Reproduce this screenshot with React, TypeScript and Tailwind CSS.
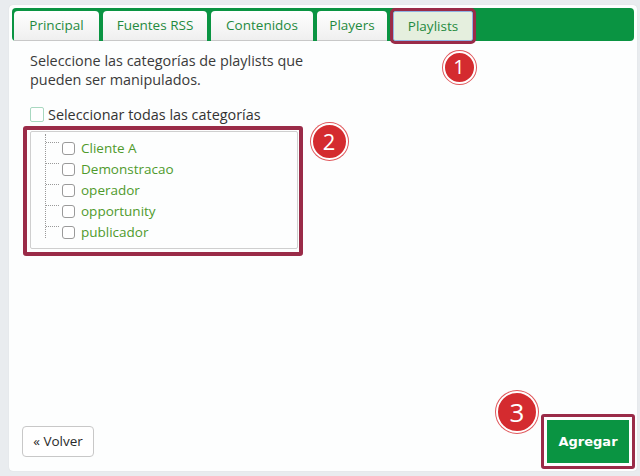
import React from 'react'

const font = { fontFamily: '"Open Sans", "DejaVu Sans", sans-serif' }

function Badge({ n, size, text, x, y }: { n: string; size: number; text: string; x: number; y: number }) {
  return (
    <div
      className="absolute rounded-full bg-[#d42b2f] border-2 border-white ring-1 ring-[#e0575b] flex items-center justify-center text-white"
      style={{ width: size, height: size, left: x - size / 2, top: y - size / 2 }}
    >
      <span className={text}>{n}</span>
    </div>
  )
}

const tabs = [
  { label: 'Principal', w: 'w-[85px]' },
  { label: 'Fuentes RSS', w: 'w-[104px]' },
  { label: 'Contenidos', w: 'w-[102px]' },
  { label: 'Players', w: 'w-[70px]' },
]

const cats = ['Cliente A', 'Demonstracao', 'operador', 'opportunity', 'publicador']

export default function App() {
  return (
    <div className="relative w-[640px] h-[476px] bg-[#e9ecef] pt-[5px] pl-[9px] overflow-hidden" style={font}>
      <div className="w-[628px] h-[466px] bg-[#fdfefe] rounded-[4px] shadow-[0_0_1px_rgba(0,0,0,0.15)] pt-[3px] px-[3px] flex flex-col">
        {/* tab bar */}
        <div className="h-[33px] bg-[#0a9442] rounded-[4px] pl-[2px] pt-[3px] flex gap-[4px]">
          {tabs.map((t) => (
            <div
              key={t.label}
              className={`${t.w} h-[30px] rounded-t-[4px] bg-gradient-to-b from-white to-[#efefef] border-b border-[#c8c8c8] flex items-center justify-center text-[13.5px] font-medium text-[#1f8a40]`}
            >
              {t.label}
            </div>
          ))}
          <div className="ml-[2px] w-[80px] h-[30px] bg-[#e5efde] border border-[#8fb3e3] outline-[3px] outline-solid outline-[#9a2b48] rounded-[2px] flex items-center justify-center text-[13.5px] font-medium text-[#1f8a40]">
            Playlists
          </div>
        </div>

        {/* body */}
        <div className="pl-[18px] pt-[10px] text-[14.4px] text-[#3a3a3a] leading-[19px]">
          <p>
            Seleccione las categorías de playlists que
            <br />
            pueden ser manipulados.
          </p>
          <div className="mt-[16px] flex items-center gap-[4px] h-[19px]">
            <span className="w-[14px] h-[15px] border border-[#a8d8c0] rounded-[2px] bg-white" />
            <span className="text-[#333]">Seleccionar todas las categorías</span>
          </div>

          <div className="relative mt-[7px] w-[268px] h-[118px] border border-[#cfcfcf] rounded-[2px] text-[13.5px]">
            <div className="absolute -left-[8px] -top-[6px] -right-[6px] -bottom-[8px] border-4 border-[#9a2b48] rounded-[3px]" />
            <div className="absolute left-[14px] top-[2px] h-[104px] border-l border-dotted border-[#999]" />
            <div className="pt-[6px] flex flex-col">
              {cats.map((c) => (
                <div key={c} className="flex items-center h-[21px]">
                  <span className="ml-[15px] w-[13px] border-t border-dotted border-[#999] self-start mt-[4px]" />
                  <span className="ml-[3px] w-[13px] h-[13px] border border-[#9a9a9a] rounded-[3px] bg-white" />
                  <span className="ml-[6px] text-[#4f9a2c]">{c}</span>
                </div>
              ))}
            </div>
          </div>
        </div>

        {/* footer */}
        <div className="mt-auto mb-[14px] pl-[10px] mr-[-1px] flex items-end justify-between">
          <button className="w-[72px] h-[31px] border border-[#c8c8c8] rounded-[4px] bg-white text-[13.5px] text-[#2a2a2a]">
            « Volver
          </button>
          <div className="mb-[-12px]">
            <div className="w-[94px] h-[55px] border-[3px] border-[#9a2b48] rounded-[3px] p-[3px]">
              <div className="w-full h-full bg-[#0a9442] flex items-center justify-center text-white font-bold text-[13px]" style={{ fontFamily: '"DejaVu Sans", sans-serif' }}>
                Agregar
              </div>
            </div>
          </div>
        </div>
      </div>

      <Badge n="1" size={33} text="text-[20px]" x={459} y={67} />
      <Badge n="2" size={37} text="text-[22px]" x={329} y={141} />
      <Badge n="3" size={42} text="text-[26px]" x={517} y={412} />
    </div>
  )
}
